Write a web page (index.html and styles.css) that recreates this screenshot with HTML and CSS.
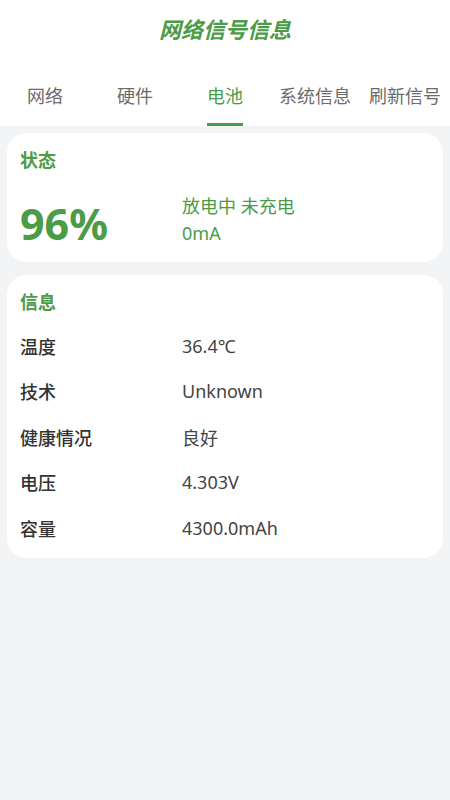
FILE: index.html
```html
<!DOCTYPE html>
<html lang="zh-CN">
<head>
    <meta charset="UTF-8">
    <meta name="viewport" content="width=device-width, initial-scale=1.0">
    <title>网络信号信息</title>
    <link rel="stylesheet" href="styles.css">
</head>
<body>

    <div class="header">
        <h1 class="title">网络信号信息</h1>
        <div class="tabs">
            <div class="tab">网络</div>
            <div class="tab">硬件</div>
            <div class="tab active">电池</div>
            <div class="tab">系统信息</div>
            <div class="tab">刷新信号</div>
        </div>
    </div>

    <div class="content">
        <div class="card status">
            <div class="card-title">状态</div>
            <div class="status-body">
                <div class="level">96%</div>
                <div class="state">
                    <div>放电中 未充电</div>
                    <div>0mA</div>
                </div>
            </div>
        </div>

        <div class="card info">
            <div class="card-title">信息</div>
            <div class="row"><span class="label">温度</span><span class="value">36.4℃</span></div>
            <div class="row"><span class="label">技术</span><span class="value">Unknown</span></div>
            <div class="row"><span class="label">健康情况</span><span class="value">良好</span></div>
            <div class="row"><span class="label">电压</span><span class="value">4.303V</span></div>
            <div class="row"><span class="label">容量</span><span class="value">4300.0mAh</span></div>
        </div>
    </div>

</body>
</html>
```

FILE: styles.css
```css
body {
    font-family: 'Noto Sans', 'Noto Sans CJK SC', sans-serif;
    background-color: #f3f4f6;
    color: #333;
    margin: 0;
    padding: 0;
}
.header {
    background: #ffffff;
}
.title {
    margin: 0;
    height: 58px;
    line-height: 58px;
    text-align: center;
    font-size: 22px;
    font-weight: bold;
    font-style: italic;
    color: #4b9b47;
}
.tabs {
    display: flex;
    height: 68px;
}
.tab {
    flex: 1;
    display: flex;
    align-items: center;
    justify-content: center;
    font-size: 18px;
    color: #6b6b6b;
    position: relative;
    padding-top: 6px;
}
.tab.active {
    color: #4b9b47;
}
.tab.active::after {
    content: '';
    position: absolute;
    bottom: 0;
    left: 50%;
    width: 36px;
    height: 3px;
    margin-left: -18px;
    background: #4b9b47;
}
.content {
    padding: 7px 7px;
    display: flex;
    flex-direction: column;
    gap: 13px;
}
.card {
    background: #ffffff;
    border-radius: 20px;
    padding: 12px 13px;
}
.card-title {
    font-size: 18px;
    font-weight: bold;
    color: #4b9b47;
    line-height: 30px;
}
.status {
    height: 105px;
}
.status-body {
    display: flex;
    align-items: center;
    margin-top: 18px;
}
.level {
    width: 162px;
    font-size: 43px;
    font-weight: bold;
    color: #4b9b47;
    line-height: 56px;
    padding-top: 2px;
}
.state {
    font-size: 18px;
    color: #4b9b47;
    line-height: 27px;
    margin-bottom: 5px;
}
.info {
    padding-bottom: 7px;
}
.info .card-title {
    margin-bottom: 6px;
}
.row {
    display: flex;
    height: 45.5px;
    align-items: center;
    font-size: 18px;
}
.label {
    width: 162px;
    font-weight: 500;
    color: #333;
}
.value {
    color: #444;
}
```
